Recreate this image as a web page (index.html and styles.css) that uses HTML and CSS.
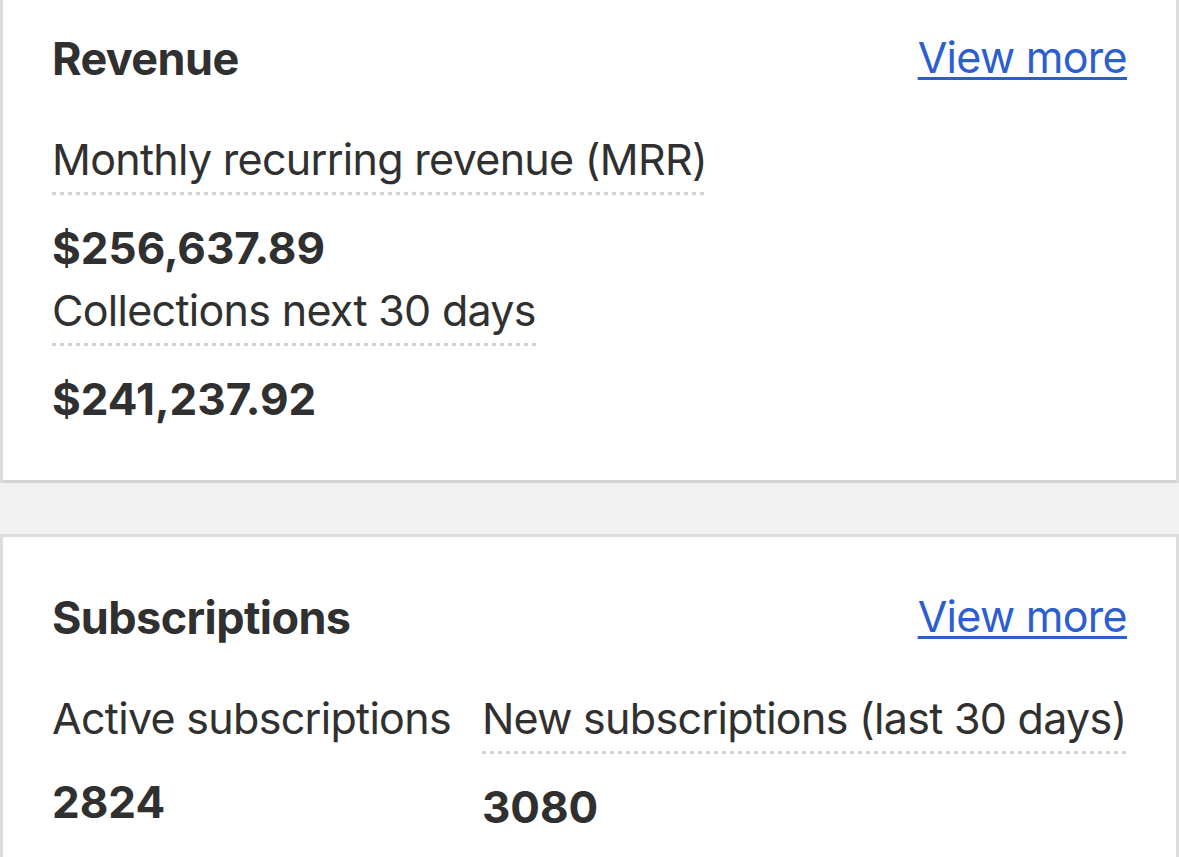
FILE: index.html
```html
<!DOCTYPE html>
<html lang="en">
<head>
<meta charset="utf-8">
<title>Dashboard</title>
<link rel="stylesheet" href="styles.css">
</head>
<body>
<main class="page">
  <section class="card">
    <header class="card-head">
      <h2 class="card-title">Revenue</h2>
      <a class="more" href="#">View more</a>
    </header>
    <div class="metric">
      <span class="label dotted">Monthly recurring revenue (MRR)</span>
      <span class="value">$256,637.89</span>
    </div>
    <div class="metric">
      <span class="label dotted">Collections next 30 days</span>
      <span class="value">$241,237.92</span>
    </div>
  </section>
  <section class="card">
    <header class="card-head">
      <h2 class="card-title">Subscriptions</h2>
      <a class="more" href="#">View more</a>
    </header>
    <div class="metric-row">
      <div class="metric">
        <span class="label">Active subscriptions</span>
        <span class="value">2824</span>
      </div>
      <div class="metric">
        <span class="label dotted">New subscriptions (last 30 days)</span>
        <span class="value">3080</span>
      </div>
    </div>
  </section>
</main>
</body>
</html>
```
FILE: styles.css
```css
html, body {
  margin: 0;
  padding: 0;
}
body {
  background: #f1f1f1;
  font-family: Inter, "Noto Sans", "Liberation Sans", sans-serif;
  color: #303030;
  font-size: 43px;
  line-height: 54px;
}
.page {
  display: flex;
  flex-direction: column;
  gap: 51px;
  margin-top: -25px;
}
.card {
  background: #ffffff;
  border: 3px solid #dcdcdc;
  border-bottom-color: #d4d4d4;
  padding: 54px 49px 54px;
  display: flex;
  flex-direction: column;
  align-items: flex-start;
}
.card-head {
  align-self: stretch;
  display: flex;
  justify-content: space-between;
  align-items: baseline;
  margin-bottom: 46px;
}
.card-title {
  margin: 0;
  font-size: 45px;
  font-weight: 700;
  line-height: 54px;
  letter-spacing: -0.6px;
}
.more {
  color: #2c5ecf;
  text-decoration: underline;
  text-decoration-thickness: 3px;
  text-underline-offset: 4px;
  font-size: 43px;
  letter-spacing: -0.7px;
  position: relative;
  top: -2px;
}
.metric {
  display: flex;
  flex-direction: column;
  align-items: flex-start;
}
.metric + .metric {
  margin-top: 8px;
}
.label {
  padding-bottom: 4px;
  white-space: nowrap;
  letter-spacing: -0.7px;
}
.label.dotted {
  padding-bottom: 9px;
  background-image: linear-gradient(to right, #d2d2d2 55%, transparent 55%);
  background-size: 8px 3px;
  background-repeat: repeat-x;
  background-position: left bottom;
}
.value {
  margin-top: 26px;
  font-weight: 700;
  font-size: 44px;
}
.metric-row {
  display: flex;
  gap: 31px;
  align-items: flex-start;
}
.metric-row .metric {
  flex: none;
}
.metric-row .metric + .metric {
  margin-top: 0;
}
```
